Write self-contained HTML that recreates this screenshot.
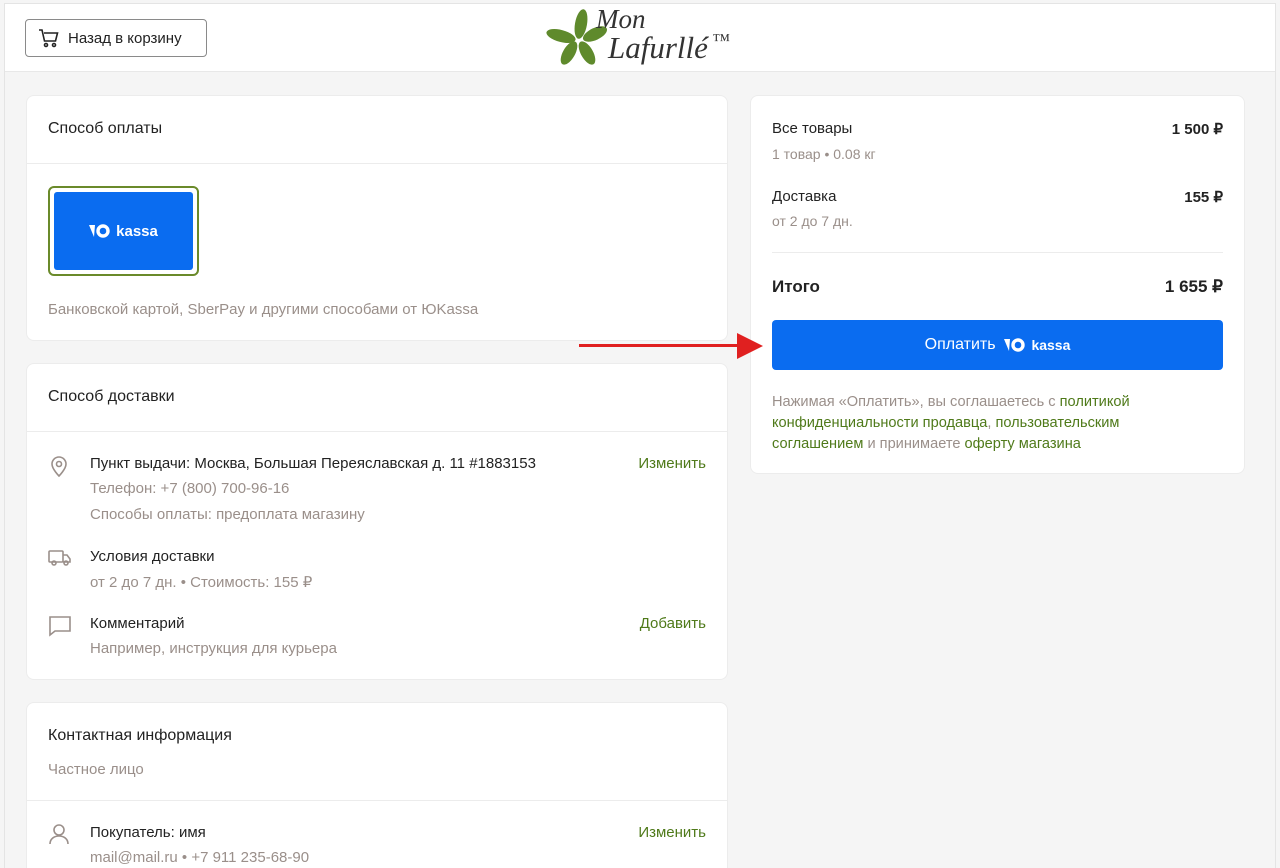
<!DOCTYPE html>
<html style="width:1280px;height:868px;overflow:hidden"><head><meta charset="utf-8"><style>
*{box-sizing:border-box;margin:0;padding:0}
body{width:1280px;height:868px;overflow:hidden;background:#f5f5f5;font-family:"Liberation Sans",sans-serif;color:#222;position:relative}
.frame{position:absolute;left:4px;top:3px;right:4px;bottom:0;border:1px solid #e4e4e4;border-bottom:none}
.hdr{position:absolute;left:5px;top:4px;width:1270px;height:68px;background:#fff;border-bottom:1px solid #e8e8e8}
.back{position:absolute;left:25px;top:19px;width:182px;height:38px;border:1px solid #8a8a8a;border-radius:4px;font-size:15px;display:flex;align-items:center;padding-left:12px;gap:8px;background:#fff}
.card{position:absolute;background:#fff;border:1px solid #ececec;border-radius:8px;overflow:hidden}
.ct{font-size:16px;color:#222;position:absolute;left:21px}
.div{position:absolute;left:0;right:0;height:1px;background:#ececec}
.g{color:#9a8f8a;font-size:14px;position:absolute}
.b{font-size:14px;color:#222;position:absolute}
.lnk{color:#4f7a1a;font-size:15px;position:absolute;right:21px}
.ic{position:absolute;left:21px}
.yk{display:inline-flex;align-items:center;gap:5px;font-weight:bold}
</style></head><body>
<div class="frame"></div>
<div class="hdr"></div>
<div class="back"><svg width="22" height="20" viewBox="0 0 22 20" fill="none" stroke="#222" stroke-width="1.6"><path d="M1 2h3l2.5 11h11l2-8H6"/><circle cx="8" cy="17" r="1.5"/><circle cx="16" cy="17" r="1.5"/></svg>Назад в корзину</div>
<svg style="position:absolute;left:545px;top:8px" width="66" height="62" viewBox="0 0 66 62"><g fill="#5f8a2c"><ellipse cx="36" cy="16" rx="6" ry="15" transform="rotate(10 36 16)"/><ellipse cx="16" cy="28" rx="15" ry="6" transform="rotate(15 16 28)"/><ellipse cx="50" cy="26" rx="13" ry="6" transform="rotate(-25 50 26)"/><ellipse cx="24" cy="45" rx="6" ry="13" transform="rotate(30 24 45)"/><ellipse cx="42" cy="45" rx="6" ry="13" transform="rotate(-30 42 45)"/></g></svg>
<div style="position:absolute;left:596px;top:4px;font-family:'Liberation Serif',serif;font-style:italic;font-size:27px;color:#333">Mon</div>
<div style="position:absolute;left:608px;top:30px;font-family:'Liberation Serif',serif;font-style:italic;font-size:31px;color:#333">Lafurllé<span style="font-style:normal;font-size:18px;vertical-align:top"> ™</span></div>

<div class="card" style="left:26px;top:95px;width:702px;height:246px">
<div class="ct" style="top:24px">Способ оплаты</div><div class="div" style="top:67px"></div>
<div style="position:absolute;left:21px;top:90px;width:151px;height:90px;border:2px solid #6a8a2a;border-radius:6px;padding:4px"><div style="background:#0a6cf0;border-radius:3px;height:78px;color:#fff;display:flex;align-items:center;justify-content:center;font-size:15px"><span class="yk"><svg width="22" height="14" viewBox="0 0 22 14"><path d="M0 1h6l-1 12z" fill="#fff"/><circle cx="14" cy="7" r="5" fill="none" stroke="#fff" stroke-width="3.4"/></svg>kassa</span></div></div>
<div class="g" style="left:21px;top:205px;font-size:15px">Банковской картой, SberPay и другими способами от ЮKassa</div>
</div>

<div class="card" style="left:26px;top:363px;width:702px;height:317px">
<div class="ct" style="top:24px">Способ доставки</div><div class="div" style="top:67px"></div>
<svg class="ic" style="top:90px" width="22" height="24" viewBox="0 0 22 24" fill="none" stroke="#9a8f8a" stroke-width="1.6"><path d="M11 22s7-7 7-12a7 7 0 0 0-14 0c0 5 7 12 7 12z"/><circle cx="11" cy="10" r="2.5"/></svg>
<div class="b" style="left:63px;top:91px;font-size:15px">Пункт выдачи: Москва, Большая Переяславская д. 11 #1883153</div>
<div class="lnk" style="top:91px">Изменить</div>
<div class="g" style="left:63px;top:116px;font-size:15px">Телефон: +7 (800) 700-96-16</div>
<div class="g" style="left:63px;top:142px;font-size:15px">Способы оплаты: предоплата магазину</div>
<svg class="ic" style="top:184px" width="24" height="20" viewBox="0 0 24 20" fill="none" stroke="#9a8f8a" stroke-width="1.6"><rect x="1" y="3" width="14" height="11" rx="1"/><path d="M15 7h4l3 4v3h-7"/><circle cx="6" cy="15" r="2"/><circle cx="18" cy="15" r="2"/></svg>
<div class="b" style="left:63px;top:184px;font-size:15px">Условия доставки</div>
<div class="g" style="left:63px;top:209px;font-size:15px">от 2 до 7 дн. • Стоимость: 155 ₽</div>
<svg class="ic" style="top:251px" width="24" height="22" viewBox="0 0 24 22" fill="none" stroke="#9a8f8a" stroke-width="1.6"><path d="M2 2h20v14H7l-5 4z"/></svg>
<div class="b" style="left:63px;top:251px;font-size:15px">Комментарий</div>
<div class="lnk" style="top:251px">Добавить</div>
<div class="g" style="left:63px;top:276px;font-size:15px">Например, инструкция для курьера</div>
</div>

<div class="card" style="left:26px;top:702px;width:702px;height:200px">
<div class="ct" style="top:24px">Контактная информация</div>
<div class="g" style="left:21px;top:58px;font-size:15px">Частное лицо</div>
<div class="div" style="top:97px"></div>
<svg class="ic" style="top:120px" width="22" height="22" viewBox="0 0 22 22" fill="none" stroke="#9a8f8a" stroke-width="1.6"><circle cx="11" cy="7" r="5"/><path d="M2 21c0-5 4-8 9-8s9 3 9 8"/></svg>
<div class="b" style="left:63px;top:121px;font-size:15px">Покупатель: имя</div>
<div class="lnk" style="top:121px">Изменить</div>
<div class="g" style="left:63px;top:146px;font-size:15px">mail@mail.ru • +7 911 235-68-90</div>
</div>

<div class="card" style="left:750px;top:95px;width:495px;height:379px">
<div class="b" style="left:21px;top:24px;font-size:15px">Все товары</div><div class="b" style="right:21px;top:24px;font-size:15px;font-weight:bold">1 500 ₽</div>
<div class="g" style="left:21px;top:50px">1 товар • 0.08 кг</div>
<div class="b" style="left:21px;top:92px;font-size:15px">Доставка</div><div class="b" style="right:21px;top:92px;font-size:15px;font-weight:bold">155 ₽</div>
<div class="g" style="left:21px;top:117px">от 2 до 7 дн.</div>
<div style="position:absolute;left:21px;right:21px;top:156px;height:1px;background:#ececec"></div>
<div class="b" style="left:21px;top:181px;font-size:17px;font-weight:bold">Итого</div><div class="b" style="right:21px;top:181px;font-size:17px;font-weight:bold">1 655 ₽</div>
<div style="position:absolute;left:21px;right:21px;top:224px;height:50px;background:#0a6cf0;border-radius:4px;color:#fff;font-size:16px;display:flex;align-items:center;justify-content:center">Оплатить&nbsp;&nbsp;<span class="yk" style="font-size:14px"><svg width="22" height="14" viewBox="0 0 22 14"><path d="M0 1h6l-1 12z" fill="#fff"/><circle cx="14" cy="7" r="5" fill="none" stroke="#fff" stroke-width="3.4"/></svg>kassa</span></div>
<div class="g" style="left:21px;right:10px;top:296px;line-height:21px;font-size:14.6px;white-space:nowrap">Нажимая «Оплатить», вы соглашаетесь с <span style="color:#4f7a1a">политикой</span><br><span style="color:#4f7a1a">конфиденциальности продавца</span>, <span style="color:#4f7a1a">пользовательским</span><br><span style="color:#4f7a1a">соглашением</span> и принимаете <span style="color:#4f7a1a">оферту магазина</span></div>
</div>

<div style="position:absolute;left:579px;top:344px;width:160px;height:3px;background:#e02020"></div>
<svg style="position:absolute;left:737px;top:333px" width="26" height="26"><path d="M0 0L26 13L0 26z" fill="#e02020"/></svg>
</body></html>
